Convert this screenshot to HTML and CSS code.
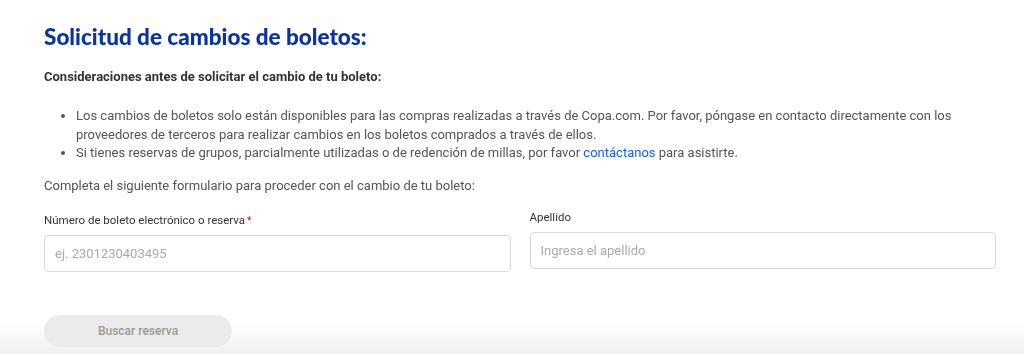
FILE: index.html
```html
<!DOCTYPE html>
<html lang="es">
<head>
    <meta charset="UTF-8">
    <meta name="viewport" content="width=device-width, initial-scale=1.0">
    <title>Solicitud de cambios de boletos</title>
    <link rel="stylesheet" href="styles.css">
</head>
<body>
    <main class="page">
        <h1 class="title">Solicitud de cambios de boletos:</h1>
        <p class="subtitle">Consideraciones antes de solicitar el cambio de tu boleto:</p>

        <ul class="notes">
            <li>Los cambios de boletos solo están disponibles para las compras realizadas a través de Copa.com. Por favor, póngase en contacto directamente con los proveedores de terceros para realizar cambios en los boletos comprados a través de ellos.</li>
            <li>Si tienes reservas de grupos, parcialmente utilizadas o de redención de millas, por favor <a href="#">contáctanos</a> para asistirte.</li>
        </ul>

        <p class="intro">Completa el siguiente formulario para proceder con el cambio de tu boleto:</p>

        <form class="form">
            <div class="fields">
                <label class="field field-required">
                    <span class="label">Número de boleto electrónico o reserva<span class="star">*</span></span>
                    <input type="text" placeholder="ej. 2301230403495">
                </label>
                <label class="field">
                    <span class="label">Apellido</span>
                    <input type="text" placeholder="Ingresa el apellido">
                </label>
            </div>
            <button type="button" class="search-btn" disabled>Buscar reserva</button>
        </form>
    </main>
    <div class="bottom-fade"></div>
</body>
</html>
```

FILE: styles.css
```css
* {
    margin: 0;
    padding: 0;
    box-sizing: border-box;
}

body {
    font-family: Roboto, "Liberation Sans", sans-serif;
    color: #555;
    background: #fff;
    overflow: hidden;
}

.page {
    padding: 24px 28px 0 44px;
}

.title {
    font-family: Lato, "Liberation Sans", sans-serif;
    font-size: 22.5px;
    font-weight: 900;
    color: #0a32a5;
    line-height: 26px;
}

.subtitle {
    margin-top: 18px;
    font-size: 13px;
    font-weight: 700;
    color: #333;
    line-height: 18px;
}

.notes {
    margin-top: 21px;
    padding-left: 32px;
    font-size: 13px;
    line-height: 18.5px;
}

.notes a {
    color: #1a5cf0;
    text-decoration: none;
}

.intro {
    margin-top: 14px;
    font-size: 13px;
    line-height: 18px;
}

.form {
    margin-top: 15px;
}

.fields {
    display: flex;
    gap: 19px;
}

.field {
    flex: 1;
    display: flex;
    flex-direction: column;
    gap: 7px;
}

.field-required {
    margin-top: 3px;
}

.label {
    font-size: 11.5px;
    color: #333;
    line-height: 15px;
}

.star {
    color: #d0021b;
    font-size: 10px;
    margin-left: 2px;
    vertical-align: top;
}

.field input {
    height: 37px;
    border: 1px solid #d9d9d9;
    border-radius: 4px;
    padding: 0 10px;
    font-family: inherit;
    font-size: 13px;
    color: #333;
    outline: none;
}

.field input::placeholder {
    color: #aaa;
}

.search-btn {
    margin-top: 43px;
    width: 188px;
    height: 32px;
    border: none;
    border-radius: 16px;
    background: #ebebeb;
    color: #9a9a9a;
    font-family: inherit;
    font-size: 12px;
    font-weight: 500;
}

.bottom-fade {
    position: fixed;
    left: 0;
    right: 0;
    bottom: 0;
    height: 30px;
    z-index: -1;
    background: linear-gradient(rgba(238, 238, 238, 0), rgba(238, 238, 238, 0.9));
    pointer-events: none;
}
```
